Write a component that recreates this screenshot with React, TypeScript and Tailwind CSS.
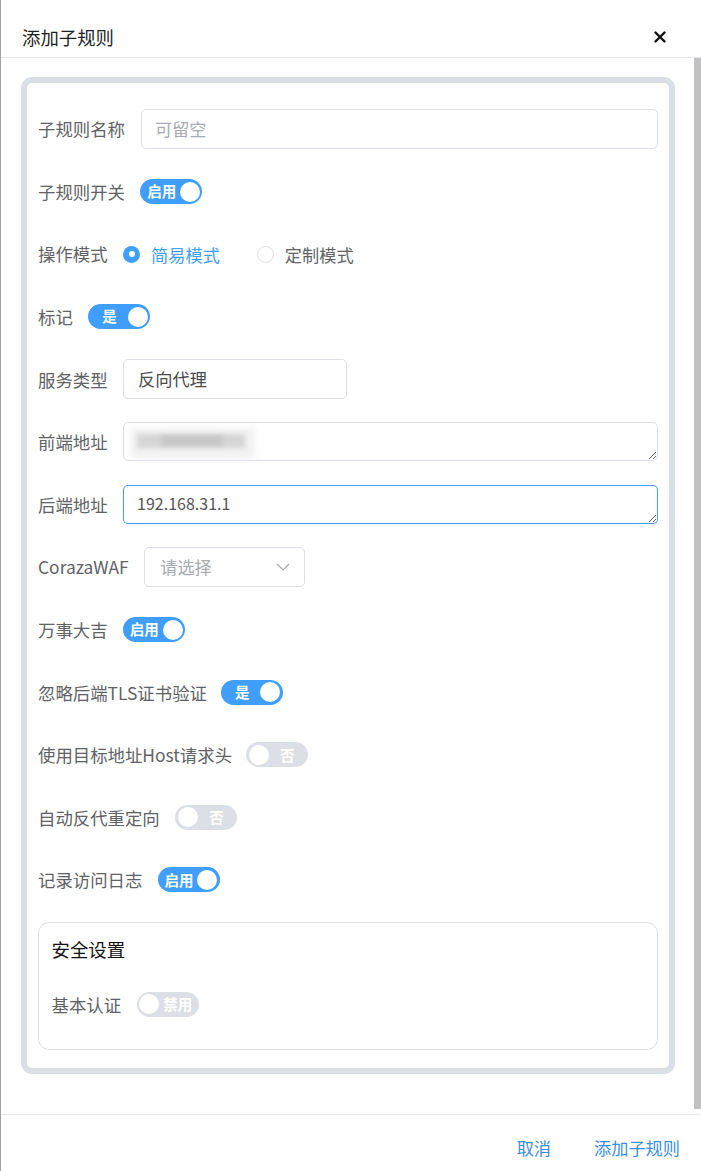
import React from "react";

const FONT = { fontFamily: '"Noto Sans CJK SC", "Noto Sans", sans-serif' };

function Switch({ on, text }: { on: boolean; text: string }) {
  if (on) {
    return (
      <div className="flex items-center w-[62px] h-[25px] rounded-full bg-[#409eff]">
        <span className="flex-1 text-center pl-[3px] text-white text-[14.5px] font-bold leading-none">{text}</span>
        <span className="w-[20px] h-[20px] rounded-full bg-white mr-[2.5px]" />
      </div>
    );
  }
  return (
    <div className="flex items-center w-[62px] h-[25px] rounded-full bg-[#dcdfe6]">
      <span className="w-[20px] h-[20px] rounded-full bg-white ml-[2.5px]" />
      <span className="flex-1 text-center pr-[2px] text-white text-[14.5px] font-bold leading-none">{text}</span>
    </div>
  );
}

function Row({ label, children, gap = "mr-[15.5px]" }: { label: string; children: React.ReactNode; gap?: string }) {
  return (
    <div className="flex items-center h-[40px]">
      <span className={`text-[17.4px] text-[#606266] whitespace-nowrap leading-none ${gap}`}>{label}</span>
      {children}
    </div>
  );
}

export default function App() {
  return (
    <div className="flex w-[701px] h-[1171px] bg-white overflow-hidden" style={FONT}>
      <div className="w-[1px] h-full bg-[#a3a3a3]" />
      <div className="flex flex-col flex-1">
        {/* header */}
        <div className="h-[58px] flex items-start pt-[24px] pl-[21px] pr-[35px] border-b border-[#e4e7ed] justify-between">
          <span className="text-[18.4px] leading-[26px] text-[#1f1f1f]">添加子规则</span>
          <svg width="12" height="12" viewBox="0 0 12 12" className="mt-[7px]">
            <path d="M1.5 1.5 L10.5 10.5 M10.5 1.5 L1.5 10.5" stroke="#111" strokeWidth="2.4" strokeLinecap="round" />
          </svg>
        </div>
        {/* body */}
        <div className="flex h-[1056px] overflow-hidden">
          <div className="flex-1 pl-[20px] pr-[19px] pt-[19px]">
            <div className="border-[6px] border-[#dcdfe6] rounded-[11px] px-[11px] pt-[26px] pb-[18px]">
              <div className="flex flex-col gap-[22.58px]">
                <Row label="子规则名称" gap="mr-[16px]">
                  <div className="flex-1 h-[40px] border border-[#dcdfe6] rounded-[5px] flex items-center px-[13px]">
                    <span className="text-[17.2px] text-[#a8abb2]">可留空</span>
                  </div>
                </Row>
                <Row label="子规则开关">
                  <Switch on text="启用" />
                </Row>
                <Row label="操作模式">
                  <div className="flex items-center">
                    <span className="w-[17px] h-[17px] rounded-full bg-[#409eff] flex items-center justify-center">
                      <span className="w-[6px] h-[6px] rounded-full bg-white" />
                    </span>
                    <span className="ml-[11px] text-[17.2px] text-[#409eff] leading-none">简易模式</span>
                    <span className="ml-[37px] w-[17px] h-[17px] rounded-full border border-[#dcdfe6] bg-white" />
                    <span className="ml-[11px] text-[17.2px] text-[#606266] leading-none">定制模式</span>
                  </div>
                </Row>
                <Row label="标记">
                  <Switch on text="是" />
                </Row>
                <Row label="服务类型">
                  <div className="w-[224px] h-[40px] border border-[#dcdfe6] rounded-[5px] flex items-center px-[14px]">
                    <span className="text-[17.2px] text-[#4a4a4a]">反向代理</span>
                  </div>
                </Row>
                <Row label="前端地址">
                  <div className="relative flex-1 h-[39px]">
                    <textarea
                      readOnly
                      className="block w-full h-[39px] border border-[#dcdfe6] rounded-[5px] px-[14px] py-[6px] text-[16px] text-[#606266] outline-none"
                      defaultValue=""
                    />
                    <div className="absolute left-[8px] top-[6px] w-[124px] h-[30px] bg-[#eeeeee] blur-[3px] opacity-80" />
                    <div className="absolute left-[14px] top-[12px] w-[108px] h-[14px] bg-[#d6d6d6] blur-[2px]" />
                    <div className="absolute left-[38px] top-[13px] w-[62px] h-[11px] bg-[#c4c4c4] blur-[2px] opacity-80" />
                  </div>
                </Row>
                <Row label="后端地址">
                  <div className="flex-1 h-[39px] rounded-[5px] p-[1px] bg-[#409eff]">
                    <textarea
                      readOnly
                      className="block w-full h-[37px] rounded-[4px] border-0 bg-white px-[13px] py-[6px] text-[16px] leading-[22px] text-[#555] outline-none"
                      style={FONT}
                      defaultValue="192.168.31.1"
                    />
                  </div>
                </Row>
                <Row label="CorazaWAF">
                  <div className="w-[161px] h-[40px] border border-[#dcdfe6] rounded-[5px] flex items-center justify-between pl-[15px] pr-[14px]">
                    <span className="text-[17.2px] text-[#a8abb2]">请选择</span>
                    <svg width="14" height="8" viewBox="0 0 14 8">
                      <polyline points="1,1 7,7 13,1" fill="none" stroke="#a8abb2" strokeWidth="1.2" />
                    </svg>
                  </div>
                </Row>
                <Row label="万事大吉">
                  <Switch on text="启用" />
                </Row>
                <Row label="忽略后端TLS证书验证" gap="mr-[14px]">
                  <Switch on text="是" />
                </Row>
                <Row label="使用目标地址Host请求头" gap="mr-[14px]">
                  <Switch on={false} text="否" />
                </Row>
                <Row label="自动反代重定向">
                  <Switch on={false} text="否" />
                </Row>
                <Row label="记录访问日志">
                  <Switch on text="启用" />
                </Row>
              </div>
              <div className="mt-[22px] border-[1.5px] border-[#dcdfe6] rounded-[11px] px-[12.5px] pt-[14px] pb-[25px]">
                <div className="text-[18.4px] leading-[25px] text-[#111]">安全设置</div>
                <div className="mt-[22.5px]">
                  <Row label="基本认证">
                    <Switch on={false} text="禁用" />
                  </Row>
                </div>
              </div>
            </div>
          </div>
          <div className="w-[7px] pt-0">
            <div className="h-[1051px] bg-[#c1c1c1]" />
          </div>
        </div>
        {/* footer */}
        <div className="h-[57px] border-t border-[#e4e7ed] flex items-center justify-end pt-[9px] pr-[21px]">
          <span className="text-[17.2px] text-[#3a8ee6]">取消</span>
          <span className="ml-[43px] text-[17.2px] text-[#3a8ee6]">添加子规则</span>
        </div>
      </div>
    </div>
  );
}
